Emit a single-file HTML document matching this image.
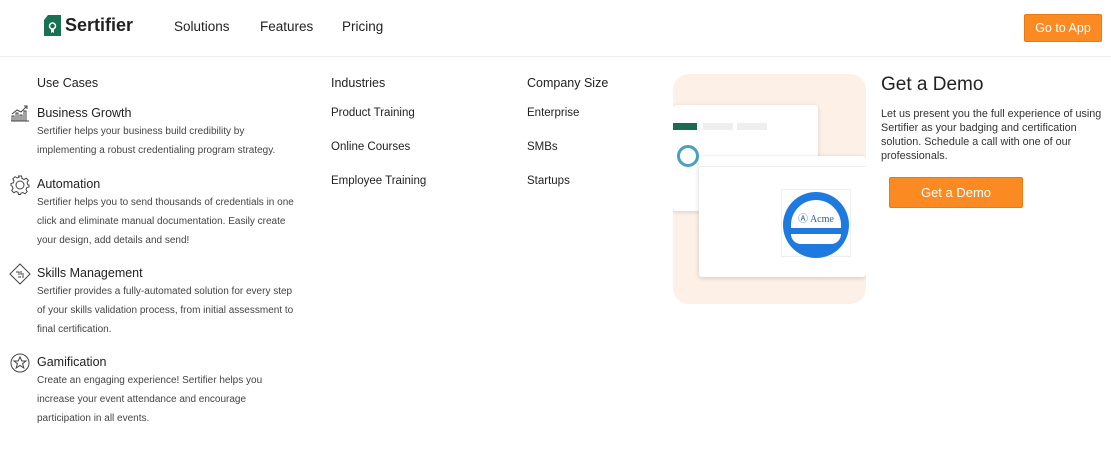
<!DOCTYPE html>
<html><head><meta charset="utf-8"><style>
*{margin:0;padding:0;box-sizing:border-box}
body{width:1111px;height:451px;background:#fff;font-family:"Liberation Sans",sans-serif;color:#222;position:relative;overflow:hidden}
.a{position:absolute;white-space:nowrap}
.nav{font-size:13.5px;color:#222;top:19px}
.h{font-size:12.5px;color:#222}
.d{font-size:10px;color:#444;line-height:19px}
.lnk{font-size:11.5px;color:#222}
.btn{background:#fb8a22;color:#fff;border-radius:2px;text-align:center;border:1px solid #e97a10}
</style></head><body>
<div class="a" style="left:0;top:56px;width:1111px;height:1px;background:#f0f0f0"></div>
<svg class="a" style="left:44px;top:15px" width="17" height="21" viewBox="0 0 17 21"><path d="M4 0H17V21H0V5Z" fill="#1a7152"/><circle cx="8.5" cy="11" r="3" fill="none" stroke="#fff" stroke-width="1.5"/><path d="M7 13.5V18L8.5 17L10 18V13.5" fill="#fff"/></svg>
<div class="a" style="left:65px;top:15px;font-size:18px;font-weight:bold;color:#222">Sertifier</div>
<div class="a nav" style="left:174px">Solutions</div>
<div class="a nav" style="left:260px">Features</div>
<div class="a nav" style="left:342px">Pricing</div>
<div class="a btn" style="left:1024px;top:14px;width:78px;height:28px;line-height:26px;font-size:12.5px">Go to App</div>

<div class="a h" style="left:37px;top:76px">Use Cases</div>
<div class="a h" style="left:331px;top:76px">Industries</div>
<div class="a h" style="left:527px;top:76px">Company Size</div>

<svg class="a" style="left:10px;top:104px" width="20" height="18" viewBox="0 0 20 18" fill="none" stroke="#444" stroke-width="1"><path d="M1 17H19M2 17V12H4V17M6 17V9H8V17M10 17V11H12V17M14 17V7H16V17M2 10L7 6L11 8L17 2M14 2H17V5"/></svg>
<div class="a h" style="left:37px;top:106px">Business Growth</div>
<div class="a d" style="left:37px;top:122px">Sertifier helps your business build credibility by<br>implementing a robust credentialing program strategy.</div>

<svg class="a" style="left:10px;top:175px" width="20" height="20" viewBox="0 0 20 20" fill="none" stroke="#444" stroke-width="1"><circle cx="10" cy="10" r="4"/><path d="M8.5 1H11.5L12 3.5L14 4.5L16.3 3.3L18.4 5.5L17 7.7L17.8 9.8L19 10V12L16.8 12.5L16 14.5L17.2 16.7L15 18.8L12.8 17.5L11 18.2L10.5 19.5H8.5L8 17.3L6 16.5L3.8 17.7L1.7 15.5L3 13.3L2.2 11.2L1 10.5V8.5L3.2 8L4 6L2.8 3.8L5 1.7L7.2 3L9 2.3Z"/></svg>
<div class="a h" style="left:37px;top:177px">Automation</div>
<div class="a d" style="left:37px;top:193px">Sertifier helps you to send thousands of credentials in one<br>click and eliminate manual documentation. Easily create<br>your design, add details and send!</div>

<svg class="a" style="left:9px;top:263px" width="22" height="22" viewBox="0 0 22 22" fill="none" stroke="#444" stroke-width="1"><path d="M11 1L21 11L11 21L1 11Z"/><path d="M7 9H10V12M12 8V11H15M9 14H12M14 12V15"/></svg>
<div class="a h" style="left:37px;top:266px">Skills Management</div>
<div class="a d" style="left:37px;top:282px">Sertifier provides a fully-automated solution for every step<br>of your skills validation process, from initial assessment to<br>final certification.</div>

<svg class="a" style="left:10px;top:353px" width="20" height="20" viewBox="0 0 20 20" fill="none" stroke="#444" stroke-width="1"><circle cx="10" cy="10" r="9"/><path d="M10 4L11.8 8H16L12.6 10.6L13.8 15L10 12.4L6.2 15L7.4 10.6L4 8H8.2Z"/></svg>
<div class="a h" style="left:37px;top:355px">Gamification</div>
<div class="a d" style="left:37px;top:371px">Create an engaging experience! Sertifier helps you<br>increase your event attendance and encourage<br>participation in all events.</div>

<div class="a lnk" style="left:331px;top:107px">Product Training</div>
<div class="a lnk" style="left:331px;top:141px">Online Courses</div>
<div class="a lnk" style="left:331px;top:175px">Employee Training</div>
<div class="a lnk" style="left:527px;top:107px">Enterprise</div>
<div class="a lnk" style="left:527px;top:141px">SMBs</div>
<div class="a lnk" style="left:527px;top:175px">Startups</div>

<div class="a" style="left:673px;top:74px;width:193px;height:230px;background:#fdf0e6;border-radius:16px;overflow:hidden">
 <div class="a" style="left:0;top:31px;width:145px;height:106px;background:#fff;border-radius:3px;box-shadow:0 1px 4px rgba(0,0,0,.15)">
  <div class="a" style="left:0;top:18px;width:24px;height:7px;background:#1a6b50"></div>
  <div class="a" style="left:30px;top:18px;width:30px;height:7px;background:#eee"></div>
  <div class="a" style="left:64px;top:18px;width:30px;height:7px;background:#eee"></div>
  <div class="a" style="left:4px;top:40px;width:22px;height:22px;border:3px solid #4aa0c0;border-radius:50%"></div>
 </div>
 <div class="a" style="left:26px;top:82px;width:167px;height:121px;background:#fff;border-radius:3px;box-shadow:0 1px 5px rgba(0,0,0,.18)">
  <div class="a" style="left:0;top:10px;width:167px;height:1px;background:#eee"></div>
  <div class="a" style="left:82px;top:33px;width:70px;height:68px;border:1px solid #eee"></div>
  <div class="a" style="left:84px;top:36px;width:66px;height:66px;border-radius:50%;background:#1f7ae0"></div>
  <div class="a" style="left:92px;top:44px;width:50px;height:28px;background:#fff;border-radius:25px 25px 0 0"></div>
  <div class="a" style="left:99px;top:54px;font-family:'Liberation Serif',serif;font-size:10px;color:#2a5ca8">Ⓐ Acme</div>
  <div class="a" style="left:92px;top:78px;width:50px;height:10px;background:#fff;border-radius:0 0 25px 25px"></div>
 </div>
</div>

<div class="a" style="left:881px;top:74px;font-size:19px;color:#222">Get a Demo</div>
<div class="a" style="left:881px;top:107px;font-size:10.8px;color:#333;line-height:14px;white-space:normal;width:230px">Let us present you the full experience of using Sertifier as your badging and certification solution. Schedule a call with one of our professionals.</div>
<div class="a btn" style="left:889px;top:177px;width:134px;height:31px;line-height:29px;font-size:13px">Get a Demo</div>
</body></html>
